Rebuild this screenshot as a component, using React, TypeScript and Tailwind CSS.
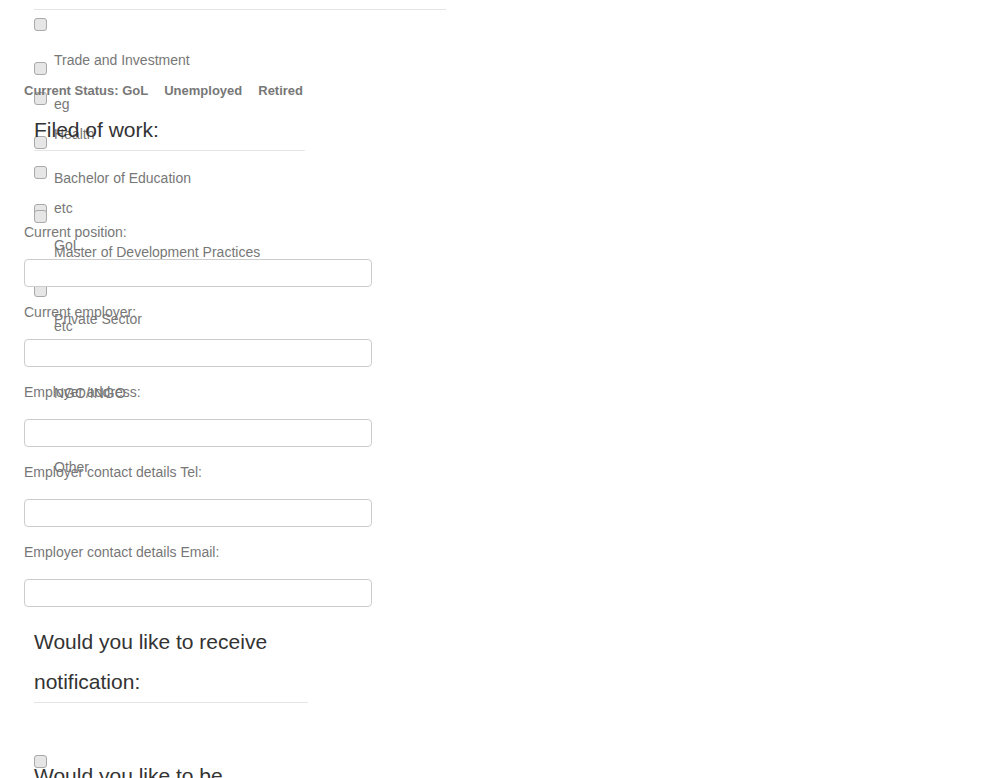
import React from "react";

const Box = () => (
  <span className="block w-[13px] h-[13px] rounded-[3px] border border-[#a9a9a9] bg-[#e6e6e6]" />
);

function TextList({ pad, items }: { pad: string; items: string[] }) {
  return (
    <div className={`col-start-1 row-start-1 pl-[54px] ${pad} flex flex-col gap-[54px]`}>
      {items.map((t, i) => (
        <div key={i} className="h-[20px] leading-[20px] text-[14px] text-[#777] whitespace-nowrap">
          {t}
        </div>
      ))}
    </div>
  );
}

function BoxList({ pad, count, gap }: { pad: string; count: number; gap: string }) {
  return (
    <div className={`col-start-1 row-start-1 pl-[34px] ${pad} flex flex-col ${gap}`}>
      {Array.from({ length: count }).map((_, i) => (
        <Box key={i} />
      ))}
    </div>
  );
}

function Field({ label, first }: { label: string; first?: boolean }) {
  return (
    <div className={`flex flex-col gap-[17px] ${first ? "mt-[71px]" : "mt-[15px]"}`}>
      <div className="h-[20px] leading-[20px] text-[14px] text-[#777]">{label}</div>
      <div className="w-[348px] h-[28px] rounded-[4px] border border-[#ccc] bg-white" />
    </div>
  );
}

export default function App() {
  return (
    <div
      className="grid w-[995px] h-[778px] overflow-hidden bg-white"
      style={{ fontFamily: '"Liberation Sans", Arial, sans-serif' }}
    >
      {/* underlying overlapping option lists */}
      <div className="col-start-1 row-start-1 grid content-start">
        <BoxList pad="pt-[18px]" count={4} gap="gap-[61px] [&>*:last-child]:-mt-[36px]" />
        <BoxList pad="pt-[62px]" count={4} gap="gap-[61px]" />
        <TextList pad="pt-[50px]" items={["Trade and Investment", "Health", "etc"]} />
        <TextList
          pad="pt-[94px]"
          items={["eg", "Bachelor of Education", "Master of Development Practices", "etc"]}
        />
        <TextList pad="pt-[235px]" items={["GoL", "Private Sector", "NGO/INGO", "Other"]} />
      </div>

      {/* main form flow */}
      <div className="relative col-start-1 row-start-1 flex flex-col items-start pl-[24px] pt-[9px]">
        <div className="ml-[10px] w-[412px] border-t border-[#e5e5e5]" />
        <div className="mt-[71px] h-[20px] leading-[20px] text-[13px] font-bold text-[#777] whitespace-nowrap flex gap-[16px]">
          <span>Current Status: GoL</span>
          <span>Unemployed</span>
          <span>Retired</span>
        </div>
        <div className="mt-[9px] ml-[10px] w-[271px] leading-[40px] text-[21px] text-[#333] border-b border-[#e5e5e5]">
          Filed of work:
        </div>
        <Field first label="Current position:" />
        <Field label="Current employer:" />
        <Field label="Employer address:" />
        <Field label="Employer contact details Tel:" />
        <Field label="Employer contact details Email:" />
        <div className="mt-[15px] ml-[10px] w-[274px] leading-[40px] text-[21px] text-[#333] border-b border-[#e5e5e5]">
          Would you like to receive notification:
        </div>
        <div className="mt-[52px] ml-[10px] flex flex-col">
          <Box />
          <div className="-mt-[12px] w-[274px] leading-[40px] text-[21px] text-[#333]">
            Would you like to be contacted:
          </div>
        </div>
      </div>
    </div>
  );
}
